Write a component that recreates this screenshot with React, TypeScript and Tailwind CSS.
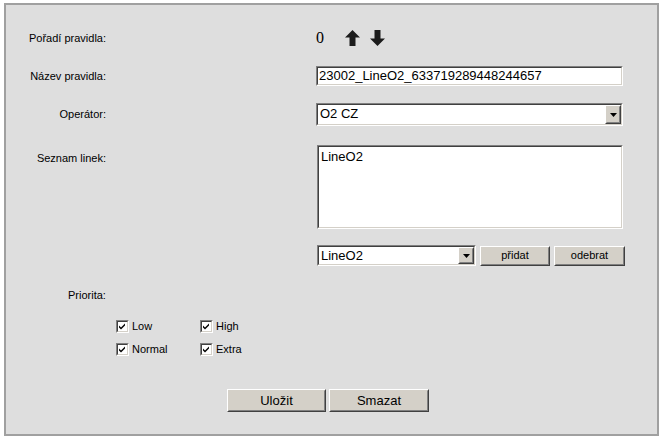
import type { ReactNode } from 'react';

const sans = 'font-["Liberation_Sans",Arial,sans-serif]';

function Sunken({ className = '', children }: { className?: string; children?: ReactNode }) {
  return (
    <div className={`border border-t-[#808080] border-l-[#808080] border-b-white border-r-white ${className}`}>
      <div className="h-full border border-t-[#404040] border-l-[#404040] border-b-[#d4d0c8] border-r-[#d4d0c8] bg-white">
        {children}
      </div>
    </div>
  );
}

function Raised({ className = '', children }: { className?: string; children?: ReactNode }) {
  return (
    <div className={`border border-t-white border-l-white border-b-[#404040] border-r-[#404040] bg-[#d4d0c8] ${className}`}>
      <div className="h-full flex items-center justify-center border border-t-[#d4d0c8] border-l-[#d4d0c8] border-b-[#808080] border-r-[#808080]">
        {children}
      </div>
    </div>
  );
}

function Select({ value, className = '' }: { value: string; className?: string }) {
  return (
    <Sunken className={className}>
      <div className="flex h-full">
        <span className="flex-1 pl-[2px] text-[13px] leading-[17px] text-black">{value}</span>
        <Raised className="w-[16px] h-full">
          <svg width="7" height="4" viewBox="0 0 7 4">
            <path d="M0 0h7L3.5 4z" fill="#000" />
          </svg>
        </Raised>
      </div>
    </Sunken>
  );
}

function Check({ label }: { label: string }) {
  return (
    <div className="flex items-center gap-[3px] h-[13px]">
      <Sunken className="w-[13px] h-[13px]">
        <svg width="9" height="9" viewBox="0 0 9 9" className="block">
          <path d="M1 3.5l2 2 4-4v2l-4 4-2-2z" fill="#000" />
        </svg>
      </Sunken>
      <span className="text-[11px] leading-[13px] text-black">{label}</span>
    </div>
  );
}

function Label({ children, className = '' }: { children: ReactNode; className?: string }) {
  return <div className={`w-[100px] text-right text-[11px] leading-[13px] text-black ${className}`}>{children}</div>;
}

export default function App() {
  return (
    <div className={`w-[663px] h-[438px] bg-white pt-[3px] pl-[4px] ${sans}`}>
      <div className="w-[655px] h-[433px] border-2 border-[#a0a0a0] bg-[#dedede] pt-[21px]">
        {/* Pořadí */}
        <div className="flex items-center h-[24px]">
          <Label>Pořadí pravidla:</Label>
          <div className="ml-[210px] flex items-center gap-[10px]">
            <span className='font-["Liberation_Serif",serif] text-[16px] leading-[16px] text-black w-[19px]'>0</span>
            <svg width="15" height="16" viewBox="0 0 15 16">
              <path d="M7.5 0L15 7.5H10.5V16H4.5V7.5H0z" fill="#1c1c1c" />
            </svg>
            <svg width="15" height="16" viewBox="0 0 15 16">
              <path d="M7.5 16L15 8.5H10.5V0H4.5V8.5H0z" fill="#1c1c1c" />
            </svg>
          </div>
        </div>

        {/* Název */}
        <div className="flex items-center mt-[16px] h-[20px]">
          <Label>Název pravidla:</Label>
          <Sunken className="ml-[210px] w-[307px] h-[20px]">
            <span className="block pl-[1px] text-[13px] leading-[16px] text-black">23002_LineO2_633719289448244657</span>
          </Sunken>
        </div>

        {/* Operátor */}
        <div className="flex items-center mt-[17px] h-[23px]">
          <Label>Operátor:</Label>
          <Select value="O2 CZ" className="ml-[210px] w-[307px] h-[23px]" />
        </div>

        {/* Seznam linek */}
        <div className="flex mt-[19px] h-[84px]">
          <Label className="pt-[7px]">Seznam linek:</Label>
          <Sunken className="ml-[211px] w-[306px] h-[84px]">
            <span className="block pl-[2px] pt-[2px] text-[13px] leading-[15px] text-black">LineO2</span>
          </Sunken>
        </div>

        {/* add / remove */}
        <div className="flex items-center mt-[16px] h-[21px] pl-[311px] gap-[4px]">
          <Select value="LineO2" className="w-[159px] h-[21px]" />
          <Raised className="w-[70px] h-[20px]">
            <span className="text-[11px] leading-[13px] text-black">přidat</span>
          </Raised>
          <Raised className="w-[71px] h-[20px]">
            <span className="text-[11px] leading-[13px] text-black">odebrat</span>
          </Raised>
        </div>

        {/* Priorita */}
        <div className="mt-[23px] pl-[62px] text-[11px] leading-[13px] text-black">Priorita:</div>
        <div className="mt-[18px] pl-[110px] grid grid-cols-[84px_84px] gap-y-[10px]">
          <Check label="Low" />
          <Check label="High" />
          <Check label="Normal" />
          <Check label="Extra" />
        </div>

        {/* Buttons */}
        <div className="mt-[33px] pl-[221px] flex gap-[3px]">
          <Raised className="w-[99px] h-[23px]">
            <span className="text-[13px] leading-[15px] text-black">Uložit</span>
          </Raised>
          <Raised className="w-[100px] h-[23px]">
            <span className="text-[13px] leading-[15px] text-black">Smazat</span>
          </Raised>
        </div>
      </div>
    </div>
  );
}
